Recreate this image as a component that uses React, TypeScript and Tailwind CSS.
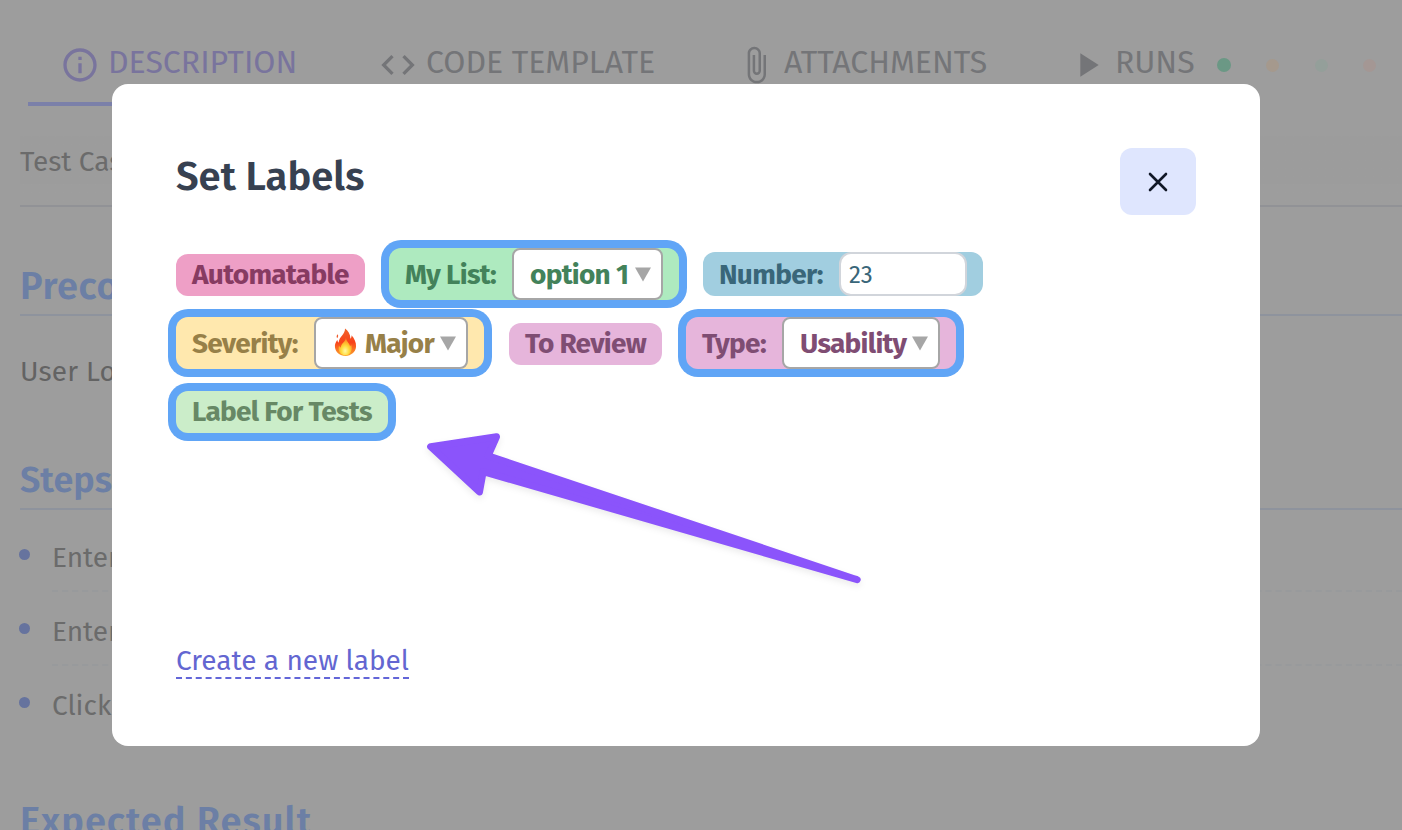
import type { ReactNode } from "react";
import { MdAttachFile, MdCode, MdInfoOutline, MdPlayArrow } from "react-icons/md";

function Tab({ icon, label, className }: { icon: ReactNode; label: string; className: string }) {
  return (
    <div className={`flex h-[106px] shrink-0 items-start pt-[45px] ${className}`}>
      {icon}
      <span className="-mt-[3px] ml-2 text-[32px] leading-10 whitespace-nowrap">{label}</span>
    </div>
  );
}

function Step({ children, last }: { children: ReactNode; last?: boolean }) {
  return (
    <li className="flex h-[74px] items-start">
      <span className="mt-6 -ml-px h-[11px] w-[11px] shrink-0 rounded-full bg-[#66739e]" />
      <span
        className={`ml-[22px] h-[67px] flex-1 pt-[13px] text-[28px] leading-10 text-[#6b6b6b] ${
          last ? "" : "border-b-2 border-dashed border-[#989a9c]"
        }`}
      >
        {children}
      </span>
    </li>
  );
}

function Pill({ children, className }: { children: ReactNode; className: string }) {
  return (
    <div
      className={`flex shrink-0 items-center rounded-xl pl-4 text-[28px] leading-[42px] font-bold tracking-[-0.7px] whitespace-nowrap ${className}`}
    >
      {children}
    </div>
  );
}

function Select({ children, className }: { children: ReactNode; className: string }) {
  return (
    <div
      className={`mr-4 ml-auto flex h-[52px] items-center justify-between rounded-lg border-2 border-[#a6a6a6] bg-white pr-2.5 pl-4 ${className}`}
    >
      <span className="flex items-center pt-px">{children}</span>
      <svg className="h-[15px] w-4" viewBox="0 0 16 15">
        <path d="M0 .5h16L8 14.5z" fill="#a6a6a6" />
      </svg>
    </div>
  );
}

function Flame() {
  return (
    <svg className="-mt-0.5 mr-2 ml-[2px] h-[29px] w-[23px]" viewBox="0 0 24 30">
      <defs>
        <linearGradient id="flame-outer" x1="0" y1="0" x2="0" y2="1">
          <stop offset="0" stopColor="#f0652b" />
          <stop offset="0.5" stopColor="#f8421a" />
          <stop offset="1" stopColor="#fba32c" />
        </linearGradient>
        <radialGradient id="flame-inner" cx="0.5" cy="0.75" r="0.65">
          <stop offset="0" stopColor="#fff8a8" />
          <stop offset="0.45" stopColor="#ffdb3d" />
          <stop offset="1" stopColor="#ff8a1f" />
        </radialGradient>
      </defs>
      <path
        d="M11.500 .5c3 2 5.500 5.500 5.700 10.500c.8-.8 1.200-2 1.100-3.500c3 3.500 5 7.500 4.700 12c-.5 5.500-5.100 9.500-11 9.500S1.600 25.400 1 20c-.4-3.600 1-5.500 2.500-8c.2 1.500.5 2.400 1.300 3C5.300 9 11.700 6.500 11.500 .5z"
        fill="url(#flame-outer)"
      />
      <path d="M3.800 6.500c.9 1.400.7 2.700-.6 4c-.8-1.400-.6-2.700.6-4z" fill="#f0592b" />
      <path
        d="M12.500 10c.3 4 3.800 5.500 4.300 9c.6-.5.9-1.200 1.100-2c2 5.500-.7 11.300-5.900 11.300c-5 0-8.500-4.800-6.800-10.300c.4 1 1.200 1.900 2 2.300C7 16 12 14.500 12.500 10z"
        fill="url(#flame-inner)"
      />
    </svg>
  );
}

function Arrow() {
  return (
    <svg
      className="absolute top-[420px] left-[410px] h-[180px] w-[470px] drop-shadow-[0_3px_3px_rgba(0,0,0,0.08)]"
      viewBox="410 420 470 180"
    >
      <path
        d="M430.700 446.700L496.500 436.800L488.100 455.800L857.200 579.700L483.200 471.600L479.500 492Z"
        fill="#8b54fb"
        stroke="#8b54fb"
        strokeWidth="7"
        strokeLinejoin="round"
      />
    </svg>
  );
}

export default function App() {
  return (
    <div className="relative h-[830px] w-[1402px] overflow-hidden bg-[#9d9d9d] font-['Fira_Sans','Noto_Sans',sans-serif]">
      <nav className="flex h-[106px] pl-7 text-[#747578]">
        <Tab
          className="w-[320px] border-b-4 border-[#7b80a9] pl-8 text-[#79749d]"
          icon={<MdInfoOutline className="h-10 w-10" />}
          label="DESCRIPTION"
        />
        <Tab className="w-[358px] pl-[30px]" icon={<MdCode className="h-10 w-10" />} label="CODE TEMPLATE" />
        <Tab className="w-[332px] pl-[30px]" icon={<MdAttachFile className="h-10 w-10" />} label="ATTACHMENTS" />
        <Tab className="w-[179px] pl-[29px]" icon={<MdPlayArrow className="h-10 w-10" />} label="RUNS" />
        <div className="flex h-[130px] items-center gap-[35px]">
          <span className="h-3.5 w-3.5 shrink-0 rounded-full bg-[#6b9885]" />
          <span className="h-[13px] w-[13px] shrink-0 rounded-full bg-[#a5998d]" />
          <span className="ml-px h-[13px] w-[13px] shrink-0 rounded-full bg-[#949f9a]" />
          <span className="h-[13px] w-[13px] shrink-0 rounded-full bg-[#a49794]" />
        </div>
      </nav>

      <main className="pl-5">
        <div className="mt-[30px] h-[71px] border-b-2 border-[#919296] bg-linear-to-b from-[#9c9c9c] from-70% to-[#9d9d9d] to-70% pt-[6px] text-[28px] leading-10 text-[#6b6b6b]">
          Test Case
        </div>
        <h2 className="h-[109px] border-b-2 border-[#8e939d] pt-[56px] text-[38px] leading-[46px] font-semibold tracking-[0.6px] text-[#6c7fa5]">
          Preconditions
        </h2>
        <p className="h-[76px] pt-[36px] text-[28px] leading-10 tracking-[0.2px] text-[#636363]">User Logged In</p>
        <h2 className="h-[118px] border-b-2 border-[#8e939d] pt-[65px] text-[36px] leading-[46px] font-semibold text-[#6c7fa5]">
          Steps
        </h2>
        <ul className="pt-[15px]">
          <Step>Enter login</Step>
          <Step>Enter password</Step>
          <Step last>Click Login</Step>
        </ul>
        <h2 className="mt-[51px] text-[38px] leading-[46px] font-semibold tracking-[1px] text-[#6c7fa5]">
          Expected Result
        </h2>
      </main>

      <section
        role="dialog"
        className="absolute top-[84px] left-[112px] flex h-[662px] w-[1148px] flex-col rounded-2xl bg-white p-16"
      >
        <header className="flex h-[68px] items-start justify-between">
          <h1 className="mt-1 text-[40px] leading-[50px] font-semibold text-[#374151]">Set Labels</h1>
          <button className="flex h-[67px] w-[76px] items-center justify-center rounded-xl bg-[#dfe6fe]">
            <svg className="h-5 w-5" viewBox="0 0 20 20" fill="none" stroke="#111827" strokeWidth="2.600" strokeLinecap="round">
              <path d="M2 2L18 18M18 2L2 18" />
            </svg>
          </button>
        </header>

        <div className="mt-8 flex flex-col items-start">
          <div className="flex h-[52px] items-center gap-6">
            <Pill className="mt-px h-[42px] w-[189px] bg-[#ee9fc6] text-[#873b62]">Automatable</Pill>
            <Pill className="h-[52px] w-[290px] bg-[#aeeabf] text-[#43825a] ring-8 ring-[#60a5f6]">
              <span className="pt-px">My List:</span>
              <Select className="w-[151px]">option 1</Select>
            </Pill>
            <Pill className="h-11 w-[280px] bg-[#a1cee0] text-[#396679]">
              <span className="pt-px">Number:</span>
              <div className="mr-4 ml-auto h-11 w-[128px] rounded-xl border-2 border-[#d1d5db] bg-white pl-2 text-2xl leading-[42px] font-normal tracking-normal">
                23
              </div>
            </Pill>
          </div>
          <div className="mt-[17px] flex h-[52px] items-center gap-6">
            <Pill className="h-[52px] w-[308px] bg-[#ffe8ae] text-[#978048] ring-8 ring-[#60a5f6]">
              <span className="pt-px">Severity:</span>
              <Select className="w-[154px]">
                <Flame />
                Major
              </Select>
            </Pill>
            <Pill className="mt-px ml-px h-[42px] w-[153px] bg-[#e6b5db] text-[#7f4d73]">To Review</Pill>
            <Pill className="h-[52px] w-[270px] bg-[#e6b5db] text-[#7f4d73] ring-8 ring-[#60a5f6]">
              <span className="pt-px">Type:</span>
              <Select className="w-[158px]">Usability</Select>
            </Pill>
          </div>
          <Pill className="mt-[22px] h-[42px] w-[212px] bg-[#cbedc9] text-[#678865] ring-8 ring-[#60a5f6]">
            Label For Tests
          </Pill>
        </div>

        <a className="mt-auto mb-[3px] w-fit border-b-2 border-dashed border-[#6366d8] pt-0.5 text-[28px] leading-8 text-[#6366d1]">
          Create a new label
        </a>
      </section>

      <Arrow />
    </div>
  );
}
